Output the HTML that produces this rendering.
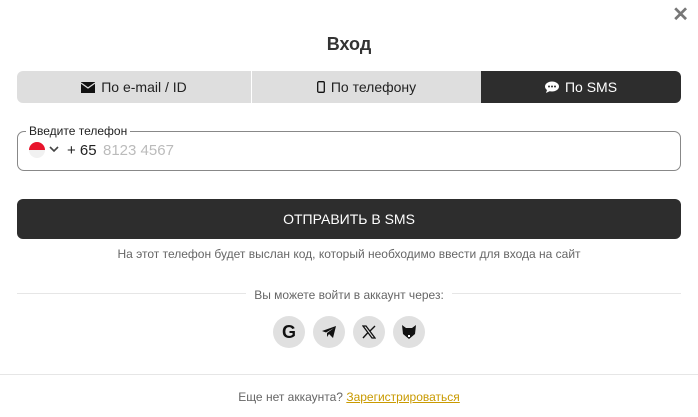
<!DOCTYPE html><html><head><style>
body{margin:0;width:698px;height:417px;background:#fff;font-family:"Liberation Sans",Arial,sans-serif;position:relative;overflow:hidden;color:#222}
.a{position:absolute}
.tabs{left:17px;top:71px;width:664px;height:32px;display:flex;border-radius:6px;overflow:hidden}
.tab{background:#dedede;display:flex;align-items:center;justify-content:center;font-size:14px;color:#222;gap:6px}
.ic{width:32px;height:32px;border-radius:50%;background:#e0e0e0;top:316px;display:flex;align-items:center;justify-content:center}
</style></head><body>
<div class="a" style="right:9px;top:2px;font-size:20px;color:#777;font-weight:bold">✕</div>
<div class="a" style="left:0;width:698px;top:34px;text-align:center;font-size:18px;font-weight:bold;color:#333">Вход</div>
<div class="a tabs">
<div class="tab" style="width:234px"><svg width="14" height="11" viewBox="0 0 14 11"><rect width="14" height="11" fill="#111"/><path d="M0 1 L7 6 L14 1" stroke="#dedede" stroke-width="1.3" fill="none"/></svg>По e-mail / ID</div>
<div style="width:1px;background:#fff"></div>
<div class="tab" style="width:229px"><svg width="8" height="12"><rect x=".7" y=".7" width="6.6" height="10.6" rx="1.2" fill="none" stroke="#111" stroke-width="1.3"/></svg>По телефону</div>
<div class="tab" style="width:200px;background:#2d2d2d;color:#fff"><svg width="14" height="12" viewBox="0 0 14 12"><ellipse cx="7" cy="5.5" rx="7" ry="5" fill="#fff"/><path d="M2 9 L1 12 L5 10z" fill="#fff"/><circle cx="4" cy="5.5" r="1" fill="#2d2d2d"/><circle cx="7" cy="5.5" r="1" fill="#2d2d2d"/><circle cx="10" cy="5.5" r="1" fill="#2d2d2d"/></svg>По SMS</div>
</div>
<div class="a" style="left:17px;top:131px;width:662px;height:38px;border:1px solid #888;border-radius:7px"></div>
<div class="a" style="left:26px;top:124px;background:#fff;padding:0 3px;font-size:12px;color:#222">Введите телефон</div>
<div class="a" style="left:29px;top:142px;width:16px;height:16px;border-radius:50%;overflow:hidden;background:#f1f1f1"><div style="height:8px;background:#e8142c"></div></div>
<svg class="a" style="left:49px;top:146px" width="10" height="7" viewBox="0 0 10 7"><path d="M1 1 L5 5 L9 1" fill="none" stroke="#444" stroke-width="1.6"/></svg>
<div class="a" style="left:67px;top:142px;font-size:15px;color:#222">+ 65</div>
<div class="a" style="left:103px;top:142px;font-size:15px;color:#bbb">8123 4567</div>
<div class="a" style="left:17px;top:199px;width:664px;height:40px;background:#2d2d2d;border-radius:6px;color:#fff;font-size:14px;display:flex;align-items:center;justify-content:center">ОТПРАВИТЬ В SMS</div>
<div class="a" style="left:0;width:698px;top:247px;text-align:center;font-size:12px;color:#666">На этот телефон будет выслан код, который необходимо ввести для входа на сайт</div>
<div class="a" style="left:17px;top:293px;width:664px;height:1px;background:#e6e6e6"></div>
<div class="a" style="left:0;width:698px;top:286px;text-align:center"><span style="background:#fff;padding:0 8px;font-size:12px;color:#666">Вы можете войти в аккаунт через:</span></div>
<div class="a ic" style="left:273px;font-weight:bold;font-size:18px;color:#111">G</div>
<div class="a ic" style="left:313px"><svg width="16" height="14" viewBox="0 0 16 14"><path d="M1 6 L15 1 L12 13 L8 9 L6 12 L6 8 L13 3 L5 7.5z" fill="#111"/></svg></div>
<div class="a ic" style="left:353px"><svg width="14" height="14" viewBox="0 0 14 14"><path d="M1 1 L10 13 L13 13 L4 1z" fill="none" stroke="#111" stroke-width="1.3"/><path d="M1 13 L6 7.5 M8 6 L13 1" stroke="#111" stroke-width="1.4"/></svg></div>
<div class="a ic" style="left:393px"><svg width="16" height="14" viewBox="0 0 16 14"><path d="M1 0 L5 3 L11 3 L15 0 L14 9 L8 14 L2 9z" fill="#111"/><rect x="7" y="10" width="2" height="2" fill="#fff"/></svg></div>
<div class="a" style="left:0;top:374px;width:698px;height:1px;background:#e6e6e6"></div>
<div class="a" style="left:0;width:698px;top:390px;text-align:center;font-size:12px;color:#666">Еще нет аккаунта? <span style="color:#c99a00;text-decoration:underline">Зарегистрироваться</span></div>
</body></html>
